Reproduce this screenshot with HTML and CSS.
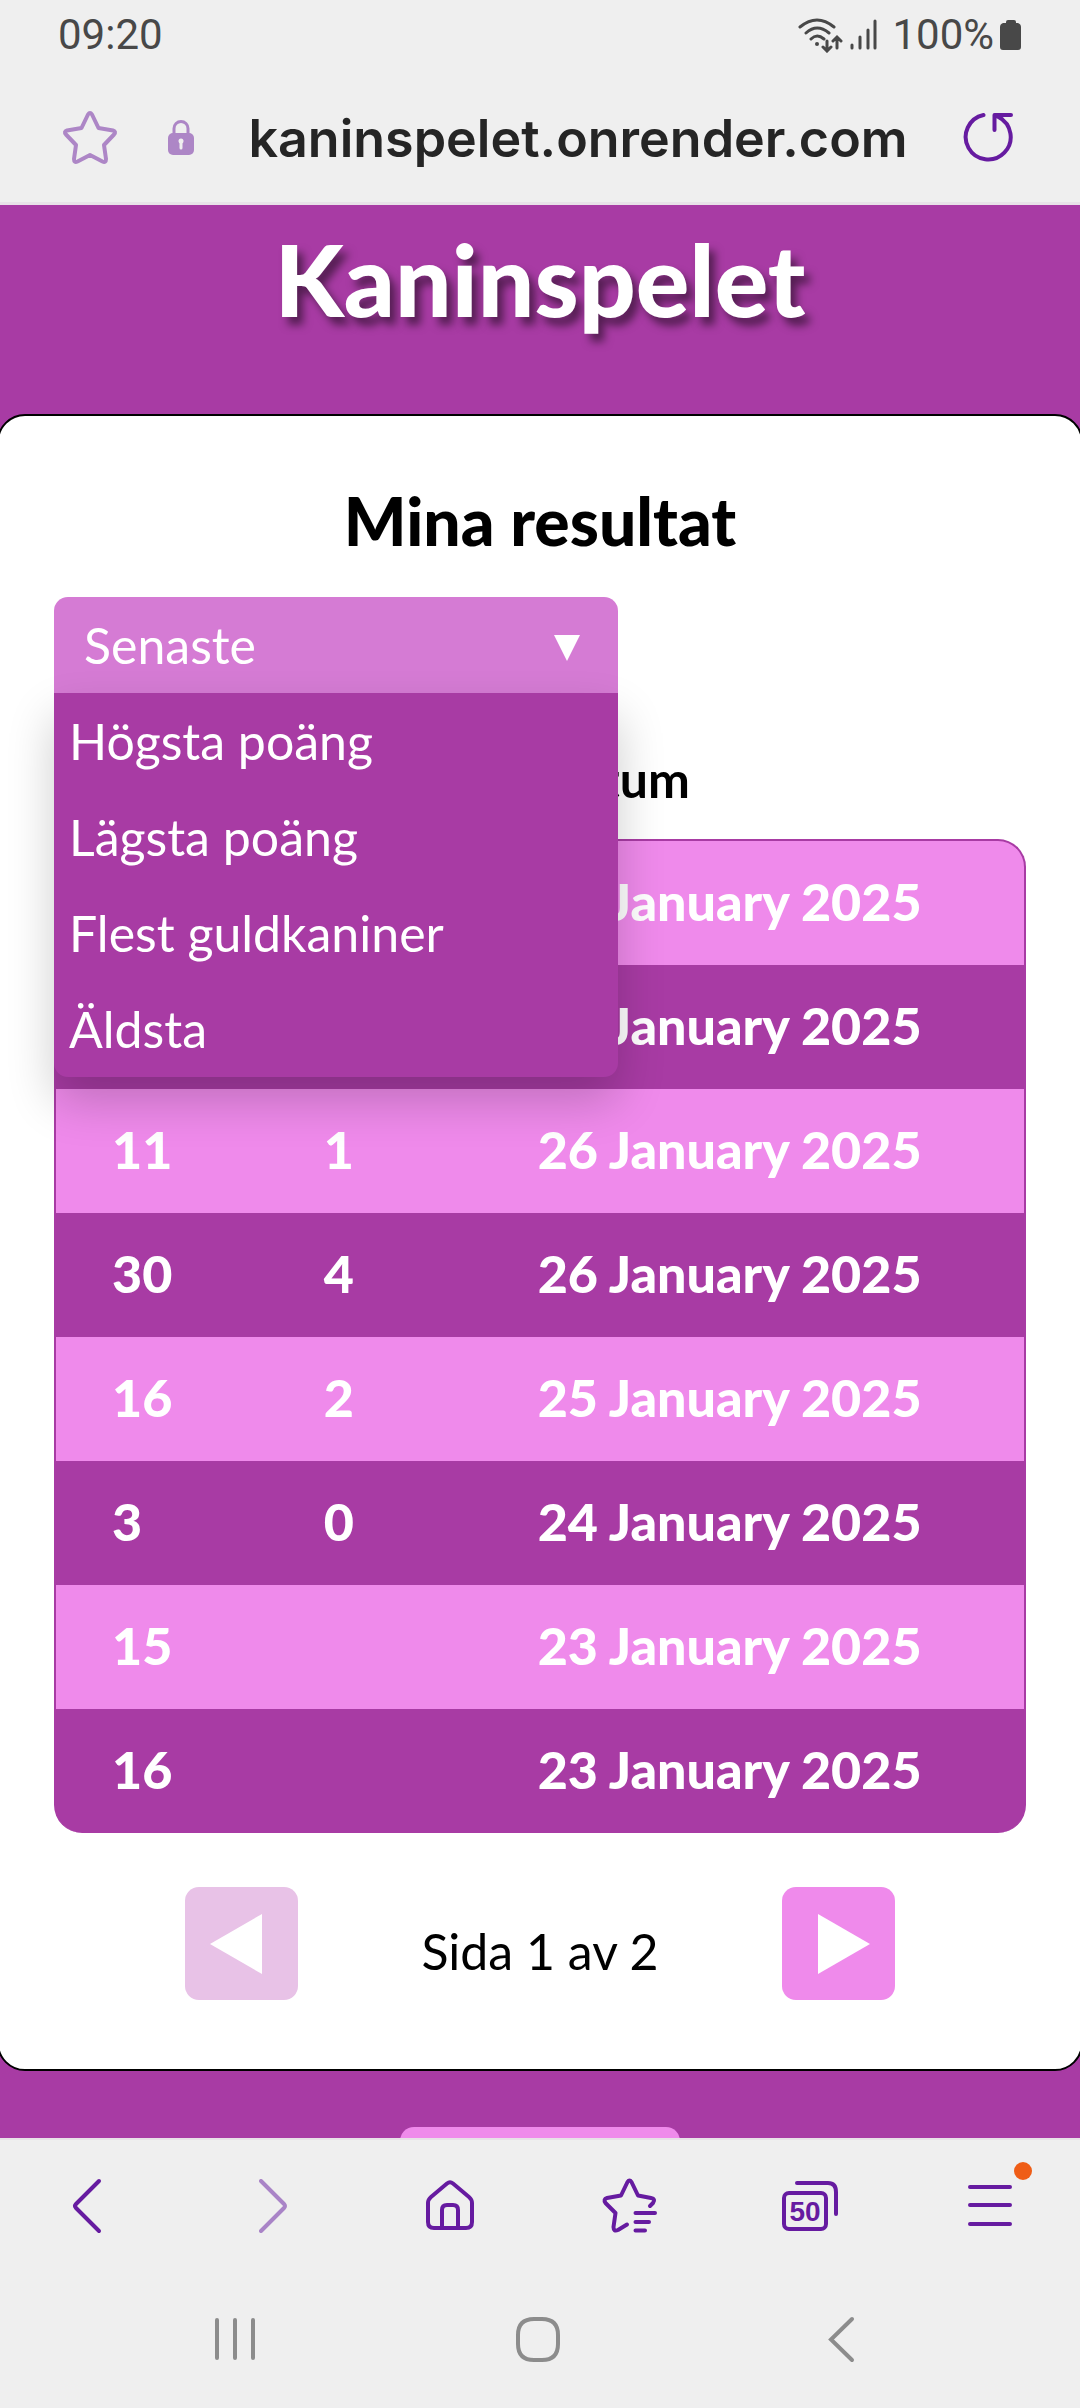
FILE: index.html
```html
<!DOCTYPE html>
<html lang="sv">
<head>
<meta charset="utf-8">
<meta name="viewport" content="width=device-width, initial-scale=1">
<title>Kaninspelet</title>
<link rel="stylesheet" href="styles.css">
</head>
<body>
<div class="status">
  <span>09:20</span>
  <div class="status-icons">
    <svg width="46" height="36" viewBox="0 0 46 36" fill="none" stroke="#484848" stroke-width="3" stroke-linecap="round" aria-hidden="true">
      <path d="M2 10Q19-4 36 10M8 16Q19 6 31 16M13 22Q19 16 26 22M29 24V33M25 30l4 4 4-4M39 31V21M35 24l4-4 4 4"/>
      <circle cx="19" cy="27" r="2" fill="#484848" stroke="none"/>
    </svg>
    <svg width="28" height="32" viewBox="0 0 28 32" fill="none" stroke="#484848" stroke-width="3" stroke-linecap="round" aria-hidden="true">
      <path d="M2 26V29M10 18V29M18 11V29M25 2V29"/>
    </svg>
    <span class="battery-text">100%</span>
    <svg width="22" height="32" viewBox="0 0 22 32" fill="#484848" aria-hidden="true">
      <path d="M6 4V3q0-2 2-2h6q2 0 2 2v1h2q3 1 3 4v20q0 3-3 3H3q-3 0-3-3V8q0-3 3-4z"/>
    </svg>
  </div>
</div>
<header class="address">
  <button class="icon-button" aria-label="Bokmärk">
    <svg width="56" height="56" viewBox="0 0 56 56" fill="none" stroke="#ad86c6" stroke-width="4" stroke-linejoin="round" aria-hidden="true">
      <path d="M26 5.500Q28 2.500 30 5.500L36.500 19L51 21.500Q54.500 22.500 52 25.500L42 36L44 50Q44 54 40.500 52.500L28 46L15.500 52.500Q12 54 12 50L14 36L4 25.500Q1.500 22.500 5 21.500L19.500 19Z"/>
    </svg>
  </button>
  <svg class="lock" width="26" height="36" viewBox="0 0 26 36" aria-hidden="true">
    <path d="M6 15V9.500a7 7 0 0 1 14 0V15" fill="none" stroke="#ad86c6" stroke-width="3"/>
    <rect y="14" width="26" height="22" rx="5" fill="#ad86c6"/>
    <circle cx="13" cy="22" r="2.500" fill="#efefef"/><path d="M13 22v7" stroke="#efefef" stroke-width="3" stroke-linecap="round"/>
  </svg>
  <span class="url">kaninspelet.onrender.com</span>
  <button class="icon-button" aria-label="Ladda om">
    <svg width="52" height="52" viewBox="0 0 52 52" fill="none" stroke="#661ba0" stroke-width="4" stroke-linecap="round" stroke-linejoin="round" aria-hidden="true">
      <path d="M21.500 4A22.500 22.500 0 1 0 36.500 6M32.500 19V4H49M33 4L40 8"/>
    </svg>
  </button>
</header>
<main class="page">
  <h1 class="logo">Kaninspelet</h1>
  <section class="card">
    <h2 class="title">Mina resultat</h2>
    <div class="sort">
      <button class="sort-button" aria-haspopup="menu" aria-expanded="true">
        <span>Senaste</span>
        <svg width="26" height="32" viewBox="0 0 26 32" fill="#fff" aria-hidden="true"><path d="M0 6H26L13 32Z"/></svg>
      </button>
      <div class="sort-menu">
        <button>Högsta poäng</button>
        <button>Lägsta poäng</button>
        <button>Flest guldkaniner</button>
        <button>Äldsta</button>
      </div>
    </div>
    <table class="results">
      <thead><tr><th aria-label="Poäng"></th><th aria-label="Guldkaniner"></th><th>Datum</th></tr></thead>
      <tbody>
        <tr><td></td><td></td><td>27 January 2025</td></tr>
        <tr><td></td><td></td><td>26 January 2025</td></tr>
        <tr><td>11</td><td>1</td><td>26 January 2025</td></tr>
        <tr><td>30</td><td>4</td><td>26 January 2025</td></tr>
        <tr><td>16</td><td>2</td><td>25 January 2025</td></tr>
        <tr><td>3</td><td>0</td><td>24 January 2025</td></tr>
        <tr><td>15</td><td></td><td>23 January 2025</td></tr>
        <tr><td>16</td><td></td><td>23 January 2025</td></tr>
      </tbody>
    </table>
    <nav class="pager">
      <button aria-label="Föregående sida" disabled>
        <svg width="52" height="60" viewBox="0 0 52 60" fill="#fff" aria-hidden="true"><path d="M52 0V60L0 30Z"/></svg>
      </button>
      <span>Sida 1 av 2</span>
      <button aria-label="Nästa sida">
        <svg width="52" height="60" viewBox="0 0 52 60" fill="#fff" aria-hidden="true"><path d="M0 0V60L52 30Z"/></svg>
      </button>
    </nav>
  </section>
  <div class="below"><button class="back-button" aria-label="Tillbaka"></button></div>
</main>
<nav class="toolbar">
  <button aria-label="Bakåt">
    <svg width="60" height="60" viewBox="0 0 60 60" aria-hidden="true"><path d="M39 5L16 28Q14 30 16 32L39 55"/></svg>
  </button>
  <button class="faded" aria-label="Framåt">
    <svg width="60" height="60" viewBox="0 0 60 60" aria-hidden="true"><path d="M21 5L44 28Q46 30 44 32L21 55"/></svg>
  </button>
  <button aria-label="Hem">
    <svg width="60" height="60" viewBox="0 0 60 60" aria-hidden="true"><path d="M27 7.500Q30 5 33 7.500L49 21Q52 23.500 52 27V46Q52 52 46 52H14Q8 52 8 46V27Q8 23.500 11 21ZM22 52V34Q22 29 27 29H33Q38 29 38 34V52"/></svg>
  </button>
  <button aria-label="Bokmärken">
    <svg width="60" height="60" viewBox="0 0 60 60" aria-hidden="true"><path d="M50 30L53 27Q56 23 51 22L38 19.500L31.500 6Q29.500 3 27.500 6L21 19.500L7 22Q3 23 5.500 27L15.500 37L13.500 51Q13.500 56 18 54L27 48.500M35.500 37H55M35.500 46H49M35.500 54.500H45"/></svg>
  </button>
  <button aria-label="Flikar">
    <svg width="60" height="60" viewBox="0 0 60 60" aria-hidden="true"><path d="M17 7H48Q56 7 56 16V38"/><rect x="4" y="17" width="42" height="36" rx="5"/><text x="25" y="45" text-anchor="middle" class="tab-count">50</text></svg>
  </button>
  <button aria-label="Meny">
    <svg width="60" height="60" viewBox="0 0 60 60" aria-hidden="true"><path d="M10 11H50M10 29H50M10 48H50"/></svg>
    <span class="dot"></span>
  </button>
</nav>
<nav class="system">
  <button aria-label="Senaste appar">
    <svg width="48" height="48" viewBox="0 0 48 48" aria-hidden="true"><path d="M6 4V42M24 4V42M42 4V42"/></svg>
  </button>
  <button aria-label="Startskärm">
    <svg width="48" height="48" viewBox="0 0 48 48" aria-hidden="true"><path d="M20 3H28Q44 3 44 19V28Q44 44 28 44H20Q4 44 4 28V19Q4 3 20 3Z"/></svg>
  </button>
  <button aria-label="Tillbaka">
    <svg width="48" height="48" viewBox="0 0 48 48" aria-hidden="true"><path d="M35 3L14 23.500L35 44"/></svg>
  </button>
</nav>
</body>
</html>
```
FILE: styles.css
```css
* { box-sizing: border-box; }

body {
  margin: 0;
  background: #efefef;
  font-family: Lato, "Open Sans", sans-serif;
  font-size: 50px;
  line-height: 64px;
}

button {
  display: flex;
  align-items: center;
  padding: 0;
  border: 0;
  background: none;
  color: inherit;
  font: inherit;
}

svg { display: block; flex: none; }

.status {
  display: flex;
  align-items: center;
  justify-content: space-between;
  height: 70px;
  padding: 0 58px;
  font: 42px/48px Roboto, sans-serif;
  color: #484848;
}

.status-icons { display: flex; align-items: center; gap: 6px; }
.battery-text { margin-left: 8px; }

.address {
  display: flex;
  align-items: center;
  height: 135px;
  padding: 2px 66px 0 62px;
  border-bottom: 3px solid #e8e1e8;
}

.lock { margin-left: 50px; }

.url {
  flex: 1;
  padding-top: 4px;
  text-align: center;
  font: 600 52px/64px Inter, sans-serif;
  color: #252525;
}

.page {
  overflow: hidden;
  background: #a83ba4;
}

.logo {
  margin: 0;
  padding: 11px 0 74px;
  font-size: 100px;
  font-weight: 900;
  line-height: 124px;
  text-align: center;
  color: #fff;
  text-shadow: 6px 8px 8px rgba(0, 0, 0, 0.5);
}

.card {
  margin: 0 -3px;
  padding: 66px 55px 69px;
  border: 2px solid #000;
  border-radius: 28px;
  background: #fff;
}

.title {
  margin: 0 0 37px;
  font-size: 66px;
  font-weight: 900;
  line-height: 78px;
  text-align: center;
}

.sort {
  position: relative;
  width: 58%;
  color: #fff;
}

.sort-button {
  justify-content: space-between;
  width: 100%;
  height: 96px;
  padding: 0 38px 0 30px;
  border-radius: 14px 14px 0 0;
  background: #d57bd4;
}

.sort-menu {
  position: absolute;
  z-index: 1;
  top: 100%;
  left: 0;
  width: 100%;
  border-radius: 0 0 14px 14px;
  background: #a83ba4;
  box-shadow: 0 24px 48px rgba(0, 0, 0, 0.2);
}

.sort-menu button {
  width: 100%;
  height: 96px;
  padding: 0 15px;
}

.results {
  width: 100%;
  margin-top: 54px;
  border-spacing: 0;
  table-layout: fixed;
  color: #fff;
  font-size: 52px;
  font-weight: 900;
}

.results th {
  width: 22%;
  padding: 0 0 28px 57px;
  font-size: 50px;
  text-align: left;
  color: #000;
}

.results th:last-child { width: 56%; }

.results td {
  height: 124px;
  padding: 0 0 4px 56px;
  background: #ef8aeb;
  white-space: nowrap;
}

.results tr:nth-child(even) td { background: #a83ba4; }
.results td:first-child { border-left: 2px solid #a83ba4; }
.results td:last-child { border-right: 2px solid #a83ba4; }
.results tr:first-child td { height: 126px; border-top: 2px solid #a83ba4; }
.results tr:first-child td:first-child { border-top-left-radius: 28px; }
.results tr:first-child td:last-child { border-top-right-radius: 28px; }
.results tr:last-child td:first-child { border-bottom-left-radius: 28px; }
.results tr:last-child td:last-child { border-bottom-right-radius: 28px; }

.pager {
  display: flex;
  align-items: center;
  justify-content: space-between;
  margin: 54px 131px 0;
}

.pager button {
  justify-content: flex-end;
  width: 113px;
  height: 113px;
  padding: 0 25px 0 36px;
  border-radius: 14px;
  background: #ef8aeb;
}

.pager button:disabled {
  justify-content: flex-start;
  padding: 0 36px 0 25px;
  background: #e8c2e7;
}

.pager span { padding-top: 14px; }

.below {
  display: flex;
  justify-content: center;
  height: 67px;
  padding-top: 56px;
}

.back-button {
  width: 280px;
  height: 113px;
  border-radius: 14px;
  background: #ef8aeb;
}

.toolbar {
  display: grid;
  grid-template-columns: repeat(6, 1fr);
  height: 134px;
  border-top: 2px solid #e8e1e8;
}

.toolbar button {
  position: relative;
  justify-content: center;
}

.toolbar svg {
  fill: none;
  stroke: #661ba0;
  stroke-width: 4;
  stroke-linecap: round;
  stroke-linejoin: round;
}

.toolbar .faded { opacity: 0.5; }

.tab-count {
  font: 700 28px "Liberation Sans", sans-serif;
  fill: #661ba0;
  stroke: none;
}

.dot {
  position: absolute;
  top: 22px;
  right: 48px;
  width: 18px;
  height: 18px;
  border-radius: 50%;
  background: #ef5d16;
}

.system {
  display: grid;
  grid-template-columns: repeat(3, 1fr);
  height: 136px;
  padding: 0 88px 0 84px;
}

.system button { justify-content: center; }

.system svg {
  fill: none;
  stroke: #8c8c8c;
  stroke-width: 4;
  stroke-linecap: round;
}
```
